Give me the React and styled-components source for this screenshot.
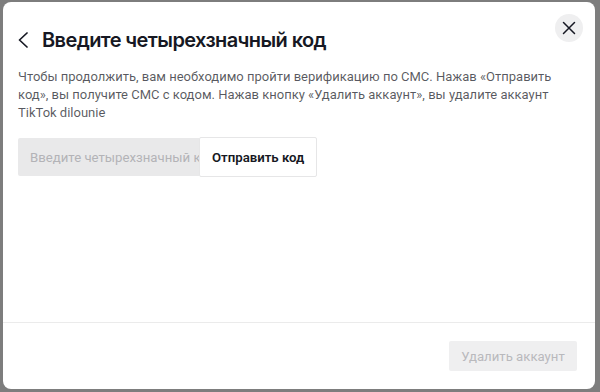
import React from "react";
import styled, { createGlobalStyle } from "styled-components";

const Global = createGlobalStyle`
  html, body { margin: 0; padding: 0; }
  body {
    width: 600px;
    height: 392px;
    background: #7d7d7d;
    overflow: hidden;
    font-family: Roboto, "Noto Sans", sans-serif;
  }
`;

const Modal = styled.div`
  box-sizing: border-box;
  margin: 2px 5px 0 3px;
  width: 592px;
  height: 387px;
  background: #fff;
  border-radius: 8px;
  display: flex;
  flex-direction: column;
`;

const Body = styled.div`
  flex: 1;
  padding: 12px 12px 0 15px;
  display: flex;
  flex-direction: column;
`;

const Header = styled.div`
  display: flex;
  align-items: flex-start;
`;

const TitleGroup = styled.div`
  flex: 1;
  display: flex;
  align-items: center;
  height: 24px;
  margin-top: 14px;
`;

const BackButton = styled.button`
  border: 0;
  background: none;
  padding: 0;
  width: 24px;
  height: 24px;
  display: flex;
  align-items: center;
  justify-content: flex-start;
  cursor: pointer;
`;

const Title = styled.h2`
  margin: 0;
  font-family: Inter, Roboto, sans-serif;
  font-size: 20px;
  line-height: 24px;
  font-weight: 600;
  color: #161823;
  letter-spacing: -0.6px;
`;

const CloseButton = styled.button`
  border: 0;
  width: 28px;
  height: 28px;
  border-radius: 50%;
  background: #efeff0;
  display: flex;
  align-items: center;
  justify-content: center;
  padding: 0;
  cursor: pointer;
`;

const Description = styled.p`
  margin: 16px 0 0 0;
  font-size: 13px;
  line-height: 18px;
  color: rgba(22, 24, 35, 0.72);
  padding-right: 22px;
`;

const CodeRow = styled.div`
  margin-top: 15px;
  display: flex;
  align-items: center;
`;

const CodeInput = styled.input`
  box-sizing: border-box;
  width: 181px;
  height: 38px;
  border: 0;
  outline: none;
  background: #e9e9ea;
  padding: 0 0 0 12px;
  font-family: inherit;
  font-size: 13.2px;
  color: #161823;
  border-radius: 2px 0 0 2px;
  &::placeholder { color: #b3b3b7; }
`;

const SendButton = styled.button`
  box-sizing: border-box;
  height: 40px;
  padding: 0 12px;
  border: 1px solid #e6e6e7;
  background: #fff;
  font-family: inherit;
  font-size: 13.2px;
  font-weight: 600;
  color: #161823;
  border-radius: 2px;
  cursor: pointer;
`;

const Footer = styled.div`
  border-top: 1px solid #ebebeb;
  height: 67px;
  box-sizing: border-box;
  display: flex;
  justify-content: flex-end;
  align-items: flex-start;
  padding: 18px 18px 0 0;
`;

const DeleteButton = styled.button`
  box-sizing: border-box;
  width: 128px;
  height: 30px;
  border: 0;
  border-radius: 2px;
  background: #efeff0;
  color: #b9b9bd;
  font-family: inherit;
  font-size: 13.2px;
  cursor: not-allowed;
`;

export default function App() {
  return (
    <>
      <Global />
      <Modal>
        <Body>
          <Header>
            <TitleGroup>
              <BackButton aria-label="Назад">
                <svg width="12" height="16" viewBox="0 0 12 16" fill="none">
                  <path d="M9 1L1.5 8L9 15" stroke="#161823" strokeWidth="1.7" strokeLinecap="round" strokeLinejoin="round" />
                </svg>
              </BackButton>
              <Title>Введите четырехзначный код</Title>
            </TitleGroup>
            <CloseButton aria-label="Закрыть">
              <svg width="14" height="14" viewBox="0 0 14 14" fill="none">
                <path d="M1.5 1.5L12.5 12.5M12.5 1.5L1.5 12.5" stroke="#161823" strokeWidth="1.5" strokeLinecap="round" />
              </svg>
            </CloseButton>
          </Header>
          <Description>
            Чтобы продолжить, вам необходимо пройти верификацию по СМС. Нажав «Отправить код», вы получите СМС с кодом. Нажав кнопку «Удалить аккаунт», вы удалите аккаунт TikTok dilounie
          </Description>
          <CodeRow>
            <CodeInput placeholder="Введите четырехзначный код" />
            <SendButton>Отправить код</SendButton>
          </CodeRow>
        </Body>
        <Footer>
          <DeleteButton disabled>Удалить аккаунт</DeleteButton>
        </Footer>
      </Modal>
    </>
  );
}
